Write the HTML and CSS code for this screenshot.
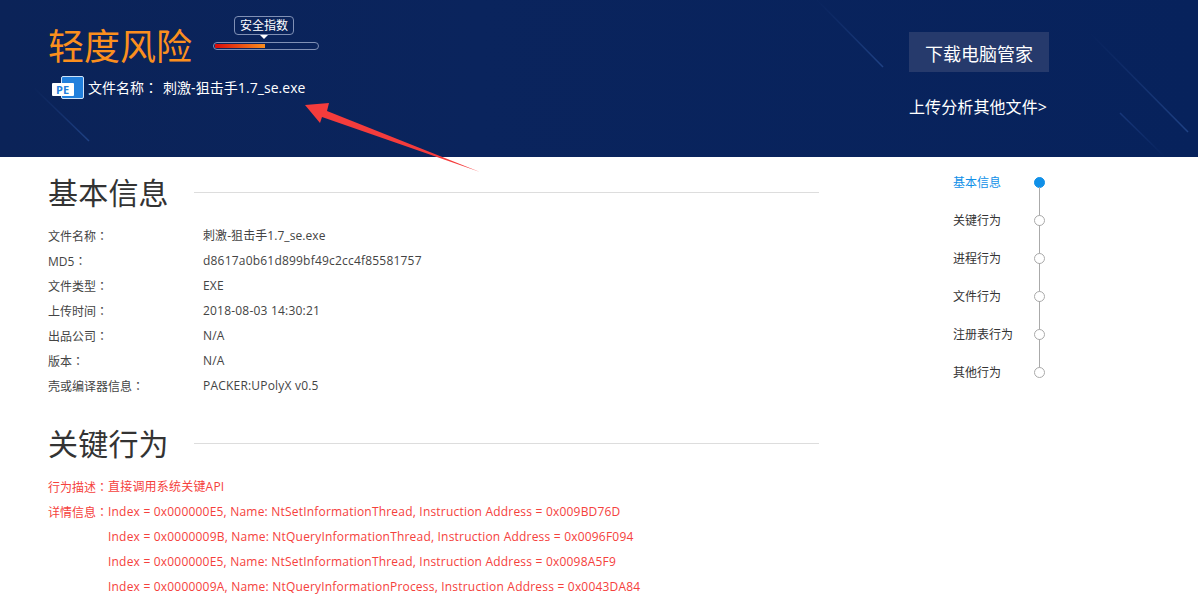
FILE: index.html
```html
<!DOCTYPE html>
<html lang="zh-CN">
<head>
<meta charset="utf-8">
<title>轻度风险</title>
<link rel="stylesheet" href="styles.css">
</head>
<body>
<header class="hero">
  <svg class="hero-lines" width="1198" height="157" viewBox="0 0 1198 157" aria-hidden="true">
    <defs>
      <linearGradient id="fadeA" x1="0" y1="0" x2="1" y2="1">
        <stop offset="0" stop-color="#1a3a7c" stop-opacity="0"/>
        <stop offset="1" stop-color="#1f4285"/>
      </linearGradient>
      <linearGradient id="fadeB" x1="0" y1="0" x2="1" y2="1">
        <stop offset="0" stop-color="#17377a"/>
        <stop offset="1" stop-color="#17377a" stop-opacity="0"/>
      </linearGradient>
    </defs>
    <path d="M33 87L89 141" stroke="url(#fadeA)" class="ln"/>
    <path d="M817 0L883 67" stroke="url(#fadeA)" class="ln"/>
    <path d="M1090 33L1188 132" stroke="url(#fadeA)" class="ln"/>
    <path d="M1120 113L1165 157" stroke="url(#fadeB)" class="ln"/>
  </svg>
  <div class="hero-left">
    <div class="risk-row">
      <h1 class="risk-title">轻度风险</h1>
      <div class="gauge">
        <span class="gauge-tip">安全指数</span>
        <div class="gauge-bar"><div class="gauge-fill"></div></div>
      </div>
    </div>
    <div class="file-row">
      <svg class="pe-icon" width="32" height="24" viewBox="0 0 32 24" aria-hidden="true">
        <rect x="9.5" y="0.5" width="22" height="22" rx="1.5" fill="#2280dc" stroke="#cfe3f8"/>
        <rect x="0" y="7" width="22" height="13" rx="1" fill="#fff"/>
        <text x="4" y="17.5" class="pe-text">PE</text>
      </svg>
      <span class="file-label">文件名称<span class="colon" lang="zh-TW">：</span></span>
      <span class="file-name">刺激-狙击手1.7_se.exe</span>
    </div>
  </div>
  <div class="hero-right">
    <a class="download">下载电脑管家</a>
    <a class="upload">上传分析其他文件&gt;</a>
  </div>
</header>

<svg class="arrow" width="200" height="90" viewBox="300 95 200 90" aria-hidden="true">
  <polygon points="305,105 329,103 327,111 480,172 322,117 320,123" fill="#f53c3c"/>
</svg>

<div class="page">
  <main class="content">
    <section class="section">
      <div class="sec-head"><h2 class="sec-title">基本信息</h2><div class="sec-rule"></div></div>
      <dl class="info">
        <div class="info-row"><dt>文件名称<span class="colon" lang="zh-TW">：</span></dt><dd class="mixed">刺激-狙击手1.7_se.exe</dd></div>
        <div class="info-row"><dt>MD5<span class="colon" lang="zh-TW">：</span></dt><dd>d8617a0b61d899bf49c2cc4f85581757</dd></div>
        <div class="info-row"><dt>文件类型<span class="colon" lang="zh-TW">：</span></dt><dd>EXE</dd></div>
        <div class="info-row"><dt>上传时间<span class="colon" lang="zh-TW">：</span></dt><dd>2018-08-03 14:30:21</dd></div>
        <div class="info-row"><dt>出品公司<span class="colon" lang="zh-TW">：</span></dt><dd>N/A</dd></div>
        <div class="info-row"><dt>版本<span class="colon" lang="zh-TW">：</span></dt><dd>N/A</dd></div>
        <div class="info-row"><dt>壳或编译器信息<span class="colon" lang="zh-TW">：</span></dt><dd>PACKER:UPolyX v0.5</dd></div>
      </dl>
    </section>
    <section class="section section-key">
      <div class="sec-head"><h2 class="sec-title">关键行为</h2><div class="sec-rule"></div></div>
      <dl class="behav">
        <div class="behav-row"><dt>行为描述<span class="colon" lang="zh-TW">：</span></dt><dd>直接调用系统关键API</dd></div>
        <div class="behav-row"><dt>详情信息<span class="colon" lang="zh-TW">：</span></dt><dd>Index = 0x000000E5, Name: NtSetInformationThread, Instruction Address = 0x009BD76D</dd></div>
        <div class="behav-row"><dt></dt><dd>Index = 0x0000009B, Name: NtQueryInformationThread, Instruction Address = 0x0096F094</dd></div>
        <div class="behav-row"><dt></dt><dd>Index = 0x000000E5, Name: NtSetInformationThread, Instruction Address = 0x0098A5F9</dd></div>
        <div class="behav-row"><dt></dt><dd>Index = 0x0000009A, Name: NtQueryInformationProcess, Instruction Address = 0x0043DA84</dd></div>
      </dl>
    </section>
  </main>
  <nav class="steps">
    <div class="step step-active"><span class="step-name">基本信息</span><span class="step-dot"></span></div>
    <div class="step"><span class="step-name">关键行为</span><span class="step-dot"></span></div>
    <div class="step"><span class="step-name">进程行为</span><span class="step-dot"></span></div>
    <div class="step"><span class="step-name">文件行为</span><span class="step-dot"></span></div>
    <div class="step"><span class="step-name">注册表行为</span><span class="step-dot"></span></div>
    <div class="step step-last"><span class="step-name">其他行为</span><span class="step-dot"></span></div>
  </nav>
</div>
</body>
</html>
```
FILE: styles.css
```css
* { box-sizing: border-box; }
html, body { margin: 0; padding: 0; }
body {
  position: relative;
  height: 606px;
  overflow: hidden;
  background: #fff;
  color: #444;
  font-family: "Open Sans", "Noto Sans CJK SC", sans-serif;
  font-size: 12px;
}
.colon { font-family: "Noto Sans CJK TC", sans-serif; }
.hero {
  position: relative;
  height: 157px;
  display: flex;
  justify-content: space-between;
  padding: 0 149px 0 48px;
  background: linear-gradient(90deg, #0b2358 0%, #0a245d 40%, #07225c 100%);
  color: #fff;
  overflow: hidden;
}
.hero-lines { position: absolute; left: 0; top: 0; }
.ln { stroke-width: 1.5; fill: none; }
.hero-left, .hero-right { position: relative; }
.risk-row { display: flex; height: 76px; }
.risk-title {
  margin: 0;
  padding-top: 22px;
  font-size: 36px;
  line-height: 50px;
  font-weight: 400;
  color: #fb8f1e;
}
.gauge { margin-left: 21px; padding-top: 16px; width: 106px; }
.gauge-tip {
  position: relative;
  display: block;
  width: 60px;
  height: 19px;
  margin-left: 21px;
  border: 1px solid #8090b5;
  border-radius: 4px;
  font-size: 12px;
  line-height: 17px;
  text-align: center;
}
.gauge-tip::after {
  content: "";
  position: absolute;
  left: 25px;
  top: 18px;
  border: 4px solid transparent;
  border-top-color: #fff;
  border-bottom: 0;
}
.gauge-bar {
  height: 8px;
  margin-top: 7px;
  padding: 1px;
  border: 1px solid #8090b5;
  border-radius: 4px;
}
.gauge-fill {
  width: 50px;
  height: 4px;
  background: linear-gradient(90deg, #d80b0b, #fb8f1e);
}
.file-row { display: flex; align-items: center; height: 24px; margin-left: 4px; font-size: 14px; }
.pe-icon { display: block; flex: none; }
.pe-text { font-family: "Open Sans", sans-serif; font-size: 11px; font-weight: 700; fill: #2280dc; }
.file-label { margin: -2px 0 0 4px; width: 75px; white-space: nowrap; }
.file-name { margin-top: -2px; letter-spacing: .06px; }
.hero-right { width: 140px; padding-top: 32px; display: flex; flex-direction: column; }
.download {
  display: block;
  height: 40px;
  background: #263a6c;
  font-size: 18px;
  line-height: 44px;
  text-align: center;
}
.upload { margin-top: 24px; font-size: 16px; line-height: 23px; white-space: nowrap; letter-spacing: .1px; }
.arrow { position: absolute; left: 300px; top: 95px; }
.page { display: flex; }
.content { width: 819px; padding-left: 48px; flex: none; }
.sec-head { display: flex; align-items: center; height: 40px; }
.section { padding-top: 15px; }
.section-key { padding-top: 25px; }
.sec-title { margin: 0; padding-top: 2px; font-size: 30px; line-height: 38px; font-weight: 400; color: #333; letter-spacing: .2px; }
.sec-rule { flex: 1; height: 1px; margin-left: 25px; background: #ddd; }
.info, .behav { margin: 11px 0 0; }
.info-row, .behav-row { display: flex; height: 25px; line-height: 25px; }
.info-row dt { width: 155px; white-space: nowrap; }
.behav { color: #f5413c; margin-top: 11px; }
.behav-row dt { width: 60px; flex: none; white-space: nowrap; }
dd { margin: 0; white-space: nowrap; letter-spacing: .2px; }
dd.mixed { letter-spacing: .07px; }
dt { font-weight: 400; }
.steps { margin-left: 134px; padding-top: 6px; width: 92px; }
.step { display: flex; justify-content: space-between; align-items: center; height: 38px; color: #333; }
.step-name { line-height: 38px; padding-top: 2px; }
.step-dot {
  position: relative;
  width: 11px;
  height: 11px;
  border: 1px solid #aaa;
  border-radius: 50%;
  background: #fff;
}
.step-dot::after {
  content: "";
  position: absolute;
  left: 4px;
  top: 9px;
  width: 1px;
  height: 29px;
  background: #aaa;
}
.step-last .step-dot::after { display: none; }
.step-active { color: #1090e8; }
.step-active .step-dot { background: #1090e8; border-color: #1090e8; }
```
